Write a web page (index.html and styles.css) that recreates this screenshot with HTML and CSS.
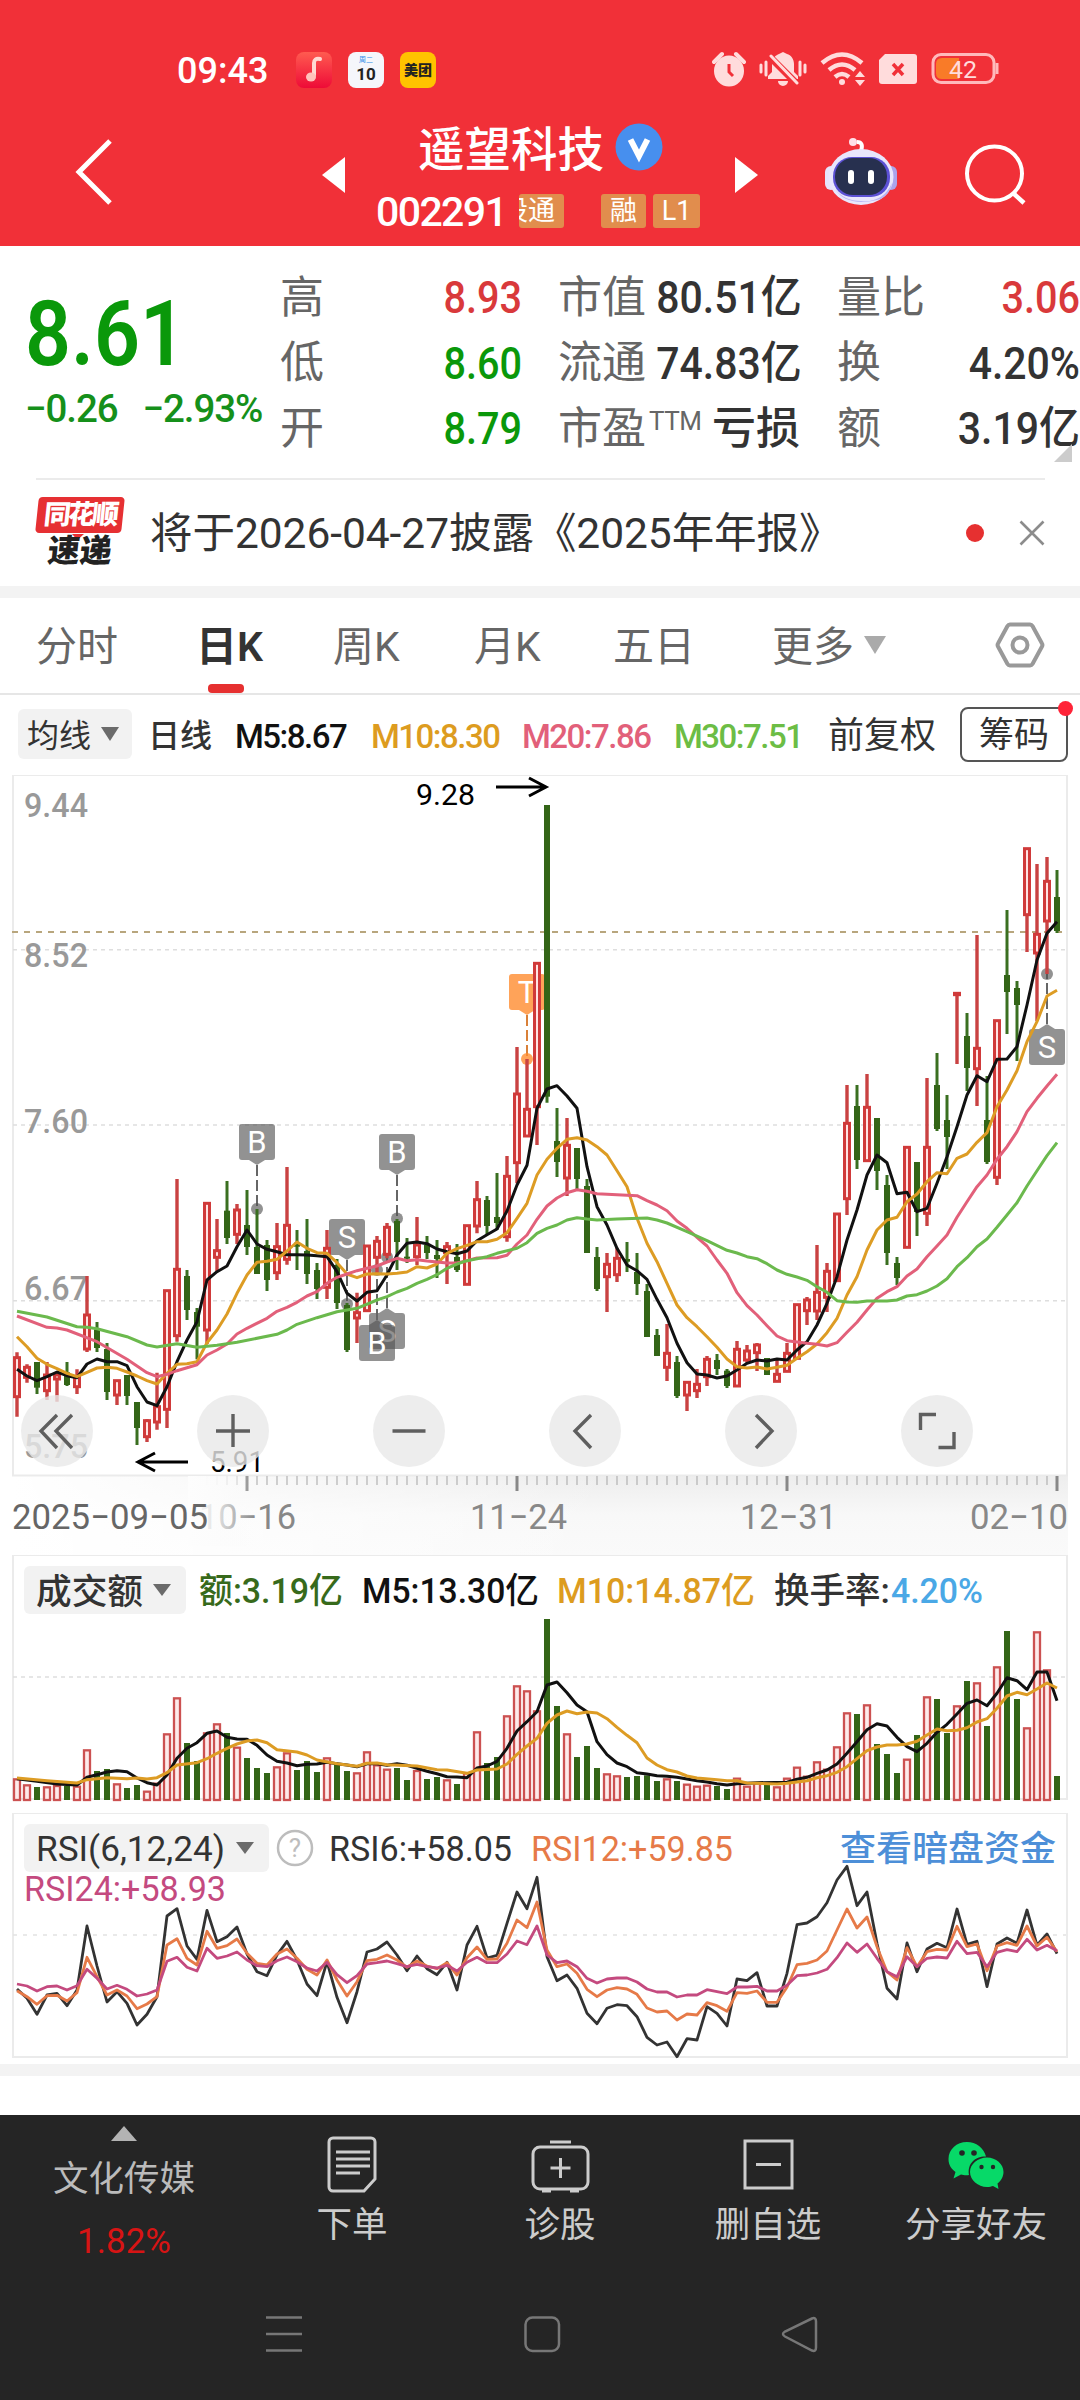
FILE: index.html
```html
<!DOCTYPE html>
<html lang="zh-CN">
<head>
<meta charset="utf-8">
<title>遥望科技 002291</title>
<link rel="stylesheet" href="styles.css">
</head>
<body>
<header class="top">
  <div class="status">
    <span class="clock">09:43</span>
    <span class="app app-music"><svg width="36" height="36" viewBox="0 0 36 36"><path d="M24 7c-4-1-6 1-6 4v12" fill="none" stroke="#ffd9d2" stroke-width="4" stroke-linecap="round"/><ellipse cx="15" cy="25" rx="5" ry="4.5" fill="#ffc2bb"/></svg></span>
    <span class="app app-cal"><i>周二</i><b>10</b></span>
    <span class="app app-mt">美团</span>
    <svg class="sys" width="290" height="40" viewBox="712 50 290 40" fill="#ffdcdc">
      <ellipse cx="729" cy="71" rx="15" ry="15.5"/>
      <path d="M714 62l8-8M744 62l-8-8" stroke="#ffdcdc" stroke-width="4" stroke-linecap="round"/>
      <path d="M729 64v8l4 4" stroke="#f13038" stroke-width="3" fill="none"/>
      <path d="M768 79v-3l4-4v-8c0-6 4-9 7-10l4-2 4 2c4 1 7 5 7 10v8l4 4v3zM778 81h10a5 5 0 0 1-10 0z"/>
      <path d="M769 56l28 28" stroke="#f13038" stroke-width="7"/>
      <path d="M771 56l26 27M766 62v13M761 65v7M800 62v13M805 65v7" stroke="#ffdcdc" stroke-width="3" stroke-linecap="round"/>
      <g fill="none" stroke="#ffdcdc" stroke-width="4.5"><path d="M822 63q20-17 40 0M829 70q13-11 26 0M835 77q7-6 14 0"/></g>
      <circle cx="842" cy="82" r="3"/><path d="M855 77l5-6 5 6zM855 80l5 6 5-6z"/>
      <path d="M885 54h29a3 3 0 0 1 3 3v24a3 3 0 0 1-3 3h-32a3 3 0 0 1-3-3V60z"/>
      <path d="M893 64l10 11M903 64l-10 11" stroke="#f13038" stroke-width="3.5"/>
      <rect x="933" y="54.500" width="61" height="28" rx="8" fill="none" stroke="#ffb9bb" stroke-width="3"/>
      <path d="M942 58h17v21h-17q-6 0-6-6v-9q0-6 6-6z" fill="#f97b28"/>
      <path d="M997 63v11" stroke="#ffb9bb" stroke-width="3"/>
      <text class="batt" x="949" y="77.500" textLength="28" lengthAdjust="spacingAndGlyphs">42</text>
    </svg>
  </div>
  <div class="titlebar">
    <svg class="back" width="40" height="70" viewBox="0 0 40 70"><path d="M35 4L4 35l31 31" fill="none" stroke="#fff" stroke-width="5"/></svg>
    <svg class="prev" width="23" height="36" viewBox="0 0 23 36"><path d="M0 18L23 0v36z" fill="#fff"/></svg>
    <div class="name">
      <div class="name-row"><h1>遥望科技</h1><span class="verified"><svg width="48" height="48" viewBox="0 0 48 48"><circle cx="24" cy="24" r="23.500" fill="#478fee"/><path d="M15.500 16.500L24 33l8.500-16.500" fill="none" stroke="#fff" stroke-width="6"/></svg></span></div>
      <div class="code-row"><span class="code">002291</span><span class="tag cut"><em>股通</em></span><span class="tag rong">融</span><span class="tag lv">L1</span></div>
    </div>
    <svg class="next" width="23" height="36" viewBox="0 0 23 36"><path d="M23 18L0 0v36z" fill="#fff"/></svg>
    <svg class="robot" width="74" height="70" viewBox="824 137 74 70">
      <path d="M861 151q3-9-4-9" fill="none" stroke="#fff" stroke-width="4"/><circle cx="853" cy="142" r="4" fill="#ffdfe8"/>
      <rect x="825" y="166" width="12" height="24" rx="6" fill="#e6e3fb"/><rect x="885" y="166" width="12" height="24" rx="6" fill="#aaa3ec"/>
      <ellipse cx="861" cy="177" rx="32.500" ry="28" fill="#e9e6fc"/><path d="M835 189q12 19 46 10 9-5 11-16-9 20-31 18-17 0-26-12z" fill="#b9b4f3"/>
      <rect x="833" y="157" width="57" height="40" rx="19" fill="#5c51d4"/><rect x="835" y="158" width="52" height="37" rx="18" fill="#27304f"/>
      <rect x="848" y="170" width="6" height="14" rx="3" fill="#fff"/><rect x="868" y="170" width="6" height="14" rx="3" fill="#fff"/>
    </svg>
    <svg class="search" width="62" height="62" viewBox="964 143 62 62"><ellipse cx="994.500" cy="173.500" rx="27.500" ry="27" fill="none" stroke="#fff" stroke-width="4"/><path d="M1013 193l11 10" stroke="#fff" stroke-width="4.500"/></svg>
  </div>
</header>

<section class="quote">
  <div class="price">
    <div class="last">8.61</div>
    <div class="chg"><span>−0.26</span><span class="pct">−2.93%</span></div>
  </div>
  <dl class="stats c1">
    <dt>高</dt><dd class="up">8.93</dd>
    <dt>低</dt><dd class="down">8.60</dd>
    <dt>开</dt><dd class="down">8.79</dd>
  </dl>
  <dl class="stats c2">
    <dt>市值</dt><dd>80.51亿</dd>
    <dt>流通</dt><dd>74.83亿</dd>
    <dt>市盈<sup>TTM</sup></dt><dd class="cn">亏损</dd>
  </dl>
  <dl class="stats c3">
    <dt>量比</dt><dd class="up">3.06</dd>
    <dt>换</dt><dd>4.20%</dd>
    <dt>额</dt><dd>3.19亿</dd>
  </dl>
  <i class="corner"></i>
</section>

<section class="news">
  <div class="logo"><span class="logo-a">同花顺</span><span class="logo-b">速递</span></div>
  <p>将于2026-04-27披露《2025年年报》</p>
  <i class="dot"></i>
  <svg width="26" height="26" viewBox="0 0 26 26"><path d="M1.500 1.500l23 23M24.500 1.500l-23 23" stroke="#8c8c8c" stroke-width="2.600"/></svg>
</section>
<div class="band"></div>

<nav class="tabs">
  <span class="t1">分时</span><span class="t2 on">日K</span><span class="t3">周K</span><span class="t4">月K</span><span class="t5">五日</span><span class="t6">更多<i class="tri"></i></span>
  <svg width="50" height="46" viewBox="0 0 50 46" fill="none" stroke="#999"><path d="M15 2.500h20a3 3 0 0 1 2.500 1.500L47 21.500a3 3 0 0 1 0 3L37.500 42a3 3 0 0 1-2.500 1.500H15a3 3 0 0 1-2.500-1.500L3 24.500a3 3 0 0 1 0-3L12.500 4A3 3 0 0 1 15 2.500z" stroke-width="4"/><circle cx="25" cy="23" r="7.500" stroke-width="4"/></svg>
</nav>

<div class="ma">
  <span class="pick">均线<i class="tri dark"></i></span>
  <b class="day">日线</b>
  <span class="v m5">M5:8.67</span><span class="v m10">M10:8.30</span><span class="v m20">M20:7.86</span><span class="v m30">M30:7.51</span>
  <span class="adj">前复权</span>
  <span class="chip">筹码<i></i></span>
</div>

<svg id="kline" class="chart" width="1080" height="780" viewBox="0 775 1080 780">
  <defs>
    <linearGradient id="axis" x1="0" y1="0" x2="0" y2="1"><stop offset="0" stop-color="#ededed"/><stop offset=".5" stop-color="#f8f8f8"/><stop offset="1" stop-color="#fafafa"/></linearGradient>
    <linearGradient id="fade"><stop offset="0" stop-color="#fff"/><stop offset="1" stop-color="#fff" stop-opacity="0"/></linearGradient>
    <linearGradient id="mask"><stop offset="0" stop-color="#fdfdfd"/><stop offset=".4" stop-color="#fcfcfc" stop-opacity=".8"/><stop offset="1" stop-color="#fafafa" stop-opacity="0"/></linearGradient>
  </defs>
  <rect x="13" y="1475" width="1055" height="80" fill="url(#axis)"/>
  <rect x="13" y="1475" width="600" height="80" fill="url(#fade)"/>
  <rect class="frame" x="13" y="775" width="1054" height="700.500"/>
  <path class="grid" d="M13 949.700H1066M13 1125H1066M13 1300.700H1066"/>
  <g class="scale">
    <text x="24" y="817" textLength="64">9.44</text><text x="24" y="967" textLength="64">8.52</text><text x="24" y="1133" textLength="64">7.60</text><text x="24" y="1300" textLength="64">6.67</text><text x="24" y="1458" textLength="64">5.75</text>
  </g>
  <path d="M12 932H1066" stroke="#b8a67d" stroke-width="2" stroke-dasharray="6 6"/>
  <g id="flags"></g>
  <g id="candles"></g>
  <g id="averages" class="line"></g>
  <g class="mark"><text x="416" y="805" textLength="59">9.28</text><path d="M496 787h49M529 778l17 9-17 9"/><text x="210" y="1472" textLength="54">5.91</text><path d="M188 1462h-50M155 1453l-17 9 17 9"/></g>
  <g id="ticks"></g>
  <g class="dates">
    <text x="199" y="1529" textLength="97">10−16</text>
    <rect x="188" y="1476" width="68" height="70" fill="url(#mask)"/>
    <text class="start" x="12" y="1529" textLength="196">2025−09−05</text>
    <text x="470" y="1529" textLength="97">11−24</text><text x="740" y="1529" textLength="97">12−31</text><text x="970" y="1529" textLength="98">02−10</text>
  </g>
  <g class="ctl">
    <circle cx="57" cy="1431" r="36"/><circle cx="233" cy="1431" r="36"/><circle cx="409" cy="1431" r="36"/><circle cx="585" cy="1431" r="36"/><circle cx="761" cy="1431" r="36"/><circle cx="937" cy="1431" r="36"/>
    <path d="M57 1415l-16 16 16 17M72 1415l-16 16 16 17M216 1431h34M233 1414v33M392.500 1431h33M591 1415l-16 16 16 17M756 1415l16 16-16 17M936 1414.500h-15.500v15.500M938.500 1447.500h15.500v-15.500"/>
  </g>
</svg>

<svg id="turnover" class="chart" width="1080" height="258" viewBox="0 1555 1080 258">
  <rect class="frame" x="13" y="1555" width="1054" height="244"/>
  <path class="grid" d="M13 1677H1066"/>
  <rect x="24" y="1566" width="162" height="48" rx="6" fill="#f2f2f2"/><path d="M153 1584h18l-9 12z" fill="#6b6b6b"/>
  <g class="legend">
    <text x="36" y="1604" textLength="107" fill="#333">成交额</text>
    <text x="199" y="1603" textLength="144" fill="#376a1b">额:3.19亿</text>
    <text x="362" y="1603" textLength="177" fill="#111">M5:13.30亿</text>
    <text x="557" y="1603" textLength="198" fill="#dd9c1f">M10:14.87亿</text>
    <text x="774" y="1603" textLength="116" fill="#333">换手率:</text>
    <text x="891" y="1603" textLength="92" fill="#4aa8e6">4.20%</text>
  </g>
  <g id="bars"></g>
  <g id="barlines" class="line"></g>
</svg>

<svg id="rsi" class="chart" width="1080" height="251" viewBox="0 1813 1080 251">
  <rect class="frame" x="13" y="1813" width="1054" height="244"/>
  <path class="grid dots" d="M13 1935H1066"/>
  <rect x="24" y="1824" width="245" height="48" rx="6" fill="#f2f2f2"/><path d="M236 1842h18l-9 12z" fill="#6b6b6b"/>
  <circle cx="295" cy="1848" r="17" fill="none" stroke="#bdbdbd" stroke-width="2.500"/>
  <text class="help" x="295" y="1857" text-anchor="middle">?</text>
  <g class="legend light">
    <text x="36" y="1861" textLength="189" fill="#333">RSI(6,12,24)</text>
    <text x="329" y="1861" textLength="183" fill="#333">RSI6:+58.05</text>
    <text x="531" y="1861" textLength="202" fill="#e67a48">RSI12:+59.85</text>
    <text x="840" y="1861" textLength="216" fill="#4d8fd8">查看暗盘资金</text>
    <text x="24" y="1901" textLength="202" fill="#c44a7f">RSI24:+58.93</text>
  </g>
  <g id="rsilines" class="line thin"></g>
</svg>
<div class="band"></div>
<div class="gap"></div>

<footer>
  <div class="actions">
    <div class="a sector"><i class="arrow"></i><span>文化传媒</span><b>1.82%</b></div>
    <div class="a"><svg width="60" height="60" viewBox="0 0 60 60"><path d="M11 4h38a4 4 0 0 1 4 4v37L42 57H11a4 4 0 0 1-4-4V8a4 4 0 0 1 4-4zM14 18h34M14 25h34M14 32h34M14 39h24"/></svg><span>下单</span></div>
    <div class="a"><svg width="60" height="60" viewBox="0 0 60 60"><rect x="3" y="13" width="55" height="42" rx="7"/><path d="M20 8h21M30.500 24v20M20.500 34h20M12 57h9M40 57h9"/></svg><span>诊股</span></div>
    <div class="a"><svg width="60" height="60" viewBox="0 0 60 60"><path d="M7 7h47v47H7zM18 30.500h25"/></svg><span>删自选</span></div>
    <div class="a"><svg class="wx" width="60" height="60" viewBox="0 0 60 60"><path d="M21 8C10.500 8 2.500 15.500 2.500 25c0 6 3 10 7 13l-2 6.500 7.500-4c2 .5 5 1 8 .500C21 29 30 22 40 22.500 38 14 30 8 21 8z"/><path d="M41 23.500c-9 0-17 6.500-17 14.500s8 15 17 15c2.500 0 4.500-.500 6-1l5.500 3-1-5.500c3.500-2.500 6-7 6-11.500 0-8-7.500-14.500-16.500-14.500z"/><g fill="#252525"><circle cx="16" cy="19" r="2.800"/><circle cx="28" cy="19" r="2.800"/><circle cx="35.500" cy="33" r="2.200"/><circle cx="47" cy="33" r="2.200"/></g></svg><span>分享好友</span></div>
  </div>
  <svg class="sysnav" width="1080" height="60" viewBox="0 2304 1080 60" fill="none" stroke="#777" stroke-width="2.500"><path d="M266 2317.500h36M266 2334h36M266 2350.500h36"/><rect x="525.500" y="2317.500" width="33.500" height="33.500" rx="7"/><path d="M812 2318.500L785 2331.500q-4 2.500 0 5l27 14q4 1.500 4-3v-26q0-4.500-4-3z"/></svg>
</footer>
<script src="chart.js"></script>
</body>
</html>
```
FILE: styles.css
```css
* { box-sizing: border-box; }
body { margin: 0; width: 1080px; height: 2400px; overflow: hidden; background: #fff; color: #333; font-family: Roboto, "Noto Sans CJK SC", sans-serif; line-height: 1; }
i, em { font-style: normal; }
svg { display: block; flex: none; }
h1, p, dl, dt, dd { margin: 0; }

.top { height: 246px; background: #f13038; color: #fff; }
.status { height: 110px; padding: 30px 78px 0 177px; display: flex; align-items: center; }
.clock { width: 119px; font-size: 36px; font-weight: 500; padding-top: 2px; }
.app { width: 36px; height: 36px; margin-right: 16px; border-radius: 8px; flex: none; display: flex; flex-direction: column; align-items: center; justify-content: center; }
.app-music { background: linear-gradient(#ff5b50, #ee0b37); }
.app-cal { background: #f5f6fb; color: #222; }
.app-cal i { font-size: 7px; color: #2b8be8; }
.app-cal b { font-size: 17px; margin-top: 2px; }
.app-mt { background: #ffc300; color: #222; font-size: 14px; font-weight: 900; }
.sys { margin-left: auto; }
.batt { font-size: 24px; fill: #ffdcdc; }

.titlebar { height: 136px; display: flex; align-items: flex-start; padding-left: 75px; }
.back { margin-top: 27px; }
.prev { margin: 47px 0 0 207px; }
.name { width: 390px; padding-left: 31px; }
.name-row { height: 78px; padding: 13px 0 0 42px; display: flex; }
h1 { font-size: 46.5px; line-height: 54px; font-weight: 500; width: 197px; white-space: nowrap; }
.code-row { display: flex; align-items: flex-start; margin-top: 6px; }
.code { font-size: 41px; font-weight: 500; line-height: 36px; width: 143px; letter-spacing: -1.6px; }
.tag { height: 34px; border-radius: 3px; background: #e18d4d; font-size: 27px; line-height: 34px; width: 45px; text-align: center; overflow: hidden; white-space: nowrap; }
.tag.cut { display: flex; justify-content: flex-end; padding-right: 9px; margin-right: 37px; }
.tag.rong { margin-right: 7px; }
.tag.lv { width: 47px; }
.next { margin: 47px 0 0 0; }
.robot { margin: 27px 0 0 66px; }
.search { margin: 33px 0 0 66px; }

.quote { height: 232px; display: flex; position: relative; }
.price { width: 280px; padding: 42px 0 0 25px; color: #0a980a; white-space: nowrap; }
.last { font-size: 91px; font-weight: 600; height: 104px; line-height: 92px; transform: scaleX(.885); transform-origin: left; }
.chg { font-size: 38.5px; line-height: 34px; font-weight: 500; display: flex; letter-spacing: -1.1px; color: #15901a; }
.pct { margin-left: 25px; }
.stats { display: grid; grid-template-rows: repeat(3, 65.5px); padding-top: 19px; height: 216px; white-space: nowrap; align-items: center; }
.stats dt { font-size: 44px; color: #666; }
.stats dd { font-size: 45px; font-weight: 500; text-align: right; transform: scaleX(.91); transform-origin: right; }
.stats dd.up, .stats dd.down { transform: scaleX(.88); }
.stats dd.cn { transform: none; font-size: 44px; }
.c1 { width: 242px; grid-template-columns: 80px 162px; }
.c2 { width: 242px; margin-left: 36px; grid-template-columns: 84px 158px; }
.c3 { width: 243px; margin-left: 37px; grid-template-columns: 90px 153px; }
sup { font-size: 26px; vertical-align: 14px; line-height: 0; margin-left: 3px; letter-spacing: -.5px; }
.up { color: #d9393b; }
.down { color: #0a980a; }
.corner { position: absolute; right: 8px; bottom: 16px; border-left: 18px solid transparent; border-bottom: 18px solid #ccc; }

.news { height: 108px; margin: 0 35px 0 36px; border-top: 2px solid #ebebeb; display: flex; align-items: center; }
.logo { width: 88px; height: 72px; display: flex; flex-direction: column; align-items: center; margin-right: 26px; }
.logo-a { width: 86px; height: 38px; background: #e63033; border-radius: 4px; color: #fff; font-size: 27px; line-height: 36px; font-weight: 900; letter-spacing: -3px; text-align: center; transform: skewX(-6deg); position: relative; }
.logo-a::after { content: ""; position: absolute; left: 37px; top: 37px; border: 6px solid transparent; border-top-color: #e63033; border-bottom: 0; }
.logo-b { font-size: 32px; line-height: 36px; font-weight: 900; color: #222; transform: skewX(-6deg); }
.news p { font-size: 42.5px; letter-spacing: -.05px; width: 780px; white-space: nowrap; padding-top: 2px; }
.dot { width: 18px; height: 18px; border-radius: 50%; background: #e63030; margin: 0 35px 0 36px; flex: none; }
.band { height: 12px; background: #f3f3f3; }

.tabs { height: 96.5px; border-bottom: 2px solid #e6e6e6; padding: 0 35px 0 36px; display: flex; align-items: center; font-size: 41px; color: #666; white-space: nowrap; }
.tabs span { height: 100%; display: flex; align-items: center; padding-top: 5px; }
.tabs span.on { color: #333; font-weight: 600; position: relative; }
.on::after { content: ""; position: absolute; left: 12px; bottom: 0; width: 36px; height: 9px; border-radius: 4px; background: #e63030; }
.t1 { width: 160px; } .t2 { width: 137px; } .t3 { width: 141px; } .t4 { width: 139px; } .t5 { width: 159px; } .t6 { width: 223px; }
.tri { border: 11px solid transparent; border-top: 18px solid #aaa; border-bottom: 0; margin: -5px 0 0 10px; }
.tri.dark { border-width: 14px 9px 0; border-top-color: #6b6b6b; margin-top: -3px; }

.ma { height: 80.5px; display: flex; align-items: center; padding: 0 12px 1px 18px; white-space: nowrap; font-size: 32px; }
.pick { width: 114px; height: 50px; padding: 3px 0 0 9px; border-radius: 6px; background: #f2f2f2; display: flex; align-items: center; }
.day { width: 87px; margin-left: 16px; font-weight: 500; font-size: 32px; padding-top: 4px; }
.v { font-size: 33px; font-weight: 500; letter-spacing: -1.5px; padding-top: 5px; }
.m5 { width: 136px; color: #111; } .m10 { width: 151px; color: #dd9c1f; } .m20 { width: 152px; color: #e2607a; } .m30 { width: 154px; color: #6cbd45; }
.adj { width: 132px; font-size: 36px; padding-top: 4px; }
.chip { width: 108px; height: 55px; border: 2px solid #555; border-radius: 8px; font-size: 35px; display: flex; align-items: center; justify-content: center; position: relative; padding-top: 3px; }
.chip i { position: absolute; right: -7px; top: -8px; width: 15px; height: 15px; border-radius: 50%; background: #ff2438; }

.frame { fill: none; stroke: #ebebeb; stroke-width: 2; }
.grid { fill: none; stroke: #dedede; stroke-width: 1.5; stroke-dasharray: 4 4; }
.grid.dots { stroke-dasharray: 4 6; stroke: #e2e2e2; }
.scale { font-size: 34px; font-weight: 500; fill: #999; }
.mark text { font-size: 30px; }
.mark path { fill: none; stroke: #000; stroke-width: 3; }
.dates { font-size: 35px; fill: #888; }
.dates .start { fill: #666; }
.ctl circle { fill: #e9e9e9; fill-opacity: .8; }
.ctl path { fill: none; stroke: #5f5f5f; stroke-width: 3.4; }
.line path { fill: none; stroke-width: 3; stroke-linejoin: round; }
.line.thin path { stroke-width: 2.8; }
.legend { font-size: 35px; font-weight: 500; }
.legend.light { font-weight: 450; }
.help { font-size: 26px; fill: #bdbdbd; }
.flag text { font-size: 31px; fill: #fff; text-anchor: middle; }

.gap { height: 39px; }
footer { height: 285px; background: #252525; color: #ccc; }
.actions { height: 189px; display: flex; padding-left: 20px; font-size: 35.5px; white-space: nowrap; }
.a { width: 208px; padding-top: 19px; display: flex; flex-direction: column; align-items: center; }
.a svg { fill: none; stroke: #ccc; stroke-width: 3; }
.a svg + span { margin-top: 14px; }
.a .wx { fill: #07d968; stroke: none; }
.sector { padding-top: 11px; margin-right: 20px; color: #bbb; }
.arrow { border: 13px solid transparent; border-top: 0; border-bottom: 15px solid #b3b3b3; }
.sector span { margin-top: 21px; }
.sector b { margin-top: 26px; font-weight: 400; color: #d71414; font-size: 35px; }
```
FILE: chart.js
```js
// Trading days are 10px apart; levels are in thirds of a pixel from each panel's base line.
const X = i => 17 + 10 * i;
const el = (id, html) => { document.getElementById(id).innerHTML = html; };

// Each day: colour, high, body top, body bottom, low.
const days = `r 637 653 770 830|r 673 682 712 728|g 666 666 743 762|r 666 705 752 780|r 695 705 717 785|g 666 697 735 738|r 688 712 740 762|r 408 525 627 636|g 546 568 624 636|g 609 627 756 780|r 720 722 765 795|g 705 705 768 795|g 786 786 864 915|r 838 842 890 906|r 698 800 846 869|r 450 452 808 864|r 117 388 587 605|g 390 408 510 540|g 504 516 560 658|r 188 190 570 612|r 237 332 352 395|g 123 212 294 312|r 192 210 283 312|g 150 255 321 345|g 207 321 402 402|g 300 315 420 453|r 249 320 398 420|r 81 256 358 374|g 270 308 320 390|g 237 333 402 432|g 369 390 447 477|r 270 325 442 477|g 357 375 489 507|g 489 495 630 636|r 458 518 534 609|r 316 318 512 515|r 288 304 352 405|r 249 262 343 355|g 237 243 306 390|g 294 350 354 369|r 231 315 350 375|g 288 315 339 357|g 300 345 357 414|r 306 320 338 432|g 312 351 390 396|r 255 257 433 435|r 123 179 258 280|g 168 180 258 282|g 99 231 249 270|r 48 109 290 305|r -279 -138 68 130|r -243 -92 -12 -12|r -532 -530 -100 15|g -1005 -1005 -130 -112|g -96 3 66 111|r -66 16 114 168|g 24 24 117 150|g 117 138 339 339|g 321 351 447 453|r 339 373 410 516|r 325 355 404 426|g 306 357 365 396|g 339 396 432 465|g 432 453 591 591|g 567 585 648 648|r 552 640 682 723|g 648 666 768 774|r 725 727 765 813|r 687 733 752 774|r 648 658 710 738|g 642 660 687 705|g 687 692 738 744|r 603 628 738 740|r 615 633 660 668|r 609 615 638 693|g 654 654 705 705|r 660 703 724 726|r 609 640 694 696|r 492 494 655 657|r 471 480 512 555|r 315 457 513 540|r 369 394 472 516|r 219 222 422 424|r -165 -50 176 225|g -165 -102 60 87|r -198 -98 62 62|g -66 -66 93 150|g 105 135 339 375|g 351 369 414 435|r 20 22 322 324|g 66 66 216 288|r -186 22 220 258|g -261 -165 -33 -27|g -135 -60 -9 87|r -442 -440 -436 -228|g -381 -312 -216 -147|r -615 -275 -214 -102|g -192 -60 66 72|r -360 -358 112 135|g -690 -495 -444 -318|g -477 -456 -405 -237|r -876 -874 -676 -564|r -828 -617 -561 -357|r -849 -776 -657 -498|g -810 -729 -627 -621`
  .split('|').map(s => { const p = s.split(' '); return [p[0], ...p.slice(1).map(v => 1140 + v / 3)]; });

el('candles', days.map(([c, h, t, b, l], i) => {
  const x = X(i);
  if (c === 'g') return `<path d="M${x} ${h}V${l}" stroke="#3a6f20" stroke-width="3"/><rect x="${x - 3}" y="${t}" width="6" height="${Math.max(b - t, 2)}" fill="#336517"/>`;
  return `<path d="M${x} ${h}V${t}M${x} ${b}V${l}" stroke="#c94242" stroke-width="3.4"/><rect x="${x - 2.5}" y="${t}" width="5" height="${b - t}" fill="#ffe3e3" stroke="#d03a3a" stroke-width="3"/>`;
}).join(''));

const path = (pts, base, color) => '<path stroke="' + color + '" d="M' + pts.map(([i, v]) => X(i) + ' ' + (base + v / 3).toFixed(1)).join('L') + '"/>';
const dense = s => s.split(' ').map((v, i) => [i, +v]);
const sparse = s => s.split(' ').map(p => p.split(':').map(Number));

const m5 = dense('688 708 722 710 696 707 713 672 657 665 665 677 740 786 797 740 665 600 545 420 395 378 320 270 312 328 335 344 344 345 347 350 395 460 483 457 452 405 345 310 306 311 327 335 341 333 302 284 267 213 135 76 -95 -153 -163 -132 -95 80 200 255 325 375 392 418 478 533 610 668 702 705 714 708 690 670 660 663 657 660 630 605 555 490 410 300 210 105 45 68 161 157 215 205 130 50 -40 -135 -193 -175 -242 -243 -280 -405 -540 -620 -655');
const m10 = dense('590 620 655 673 686 700 710 697 684 682 685 696 708 722 732 700 673 671 665 608 570 522 460 405 367 364 358 333 306 325 338 340 368 402 413 402 401 402 400 396 380 384 372 340 326 316 305 305 298 278 235 190 105 58 25 -2 -7 0 20 45 92 140 235 310 365 430 495 533 560 590 622 657 680 684 681 687 682 676 655 635 612 578 535 465 410 330 270 240 232 185 162 125 98 101 55 42 7 -22 -100 -150 -208 -295 -355 -432 -449');
const m20 = sparse('0:528 3:562 4:564 5:570 8:605 11:658 13:698 14:710 15:703 16:692 18:674 19:645 20:630 21:612 22:582 23:565 25:535 26:514 27:502 28:487 29:468 30:455 31:430 32:412 33:402 34:392 35:385 36:378 37:366 38:355 39:362 40:359 41:363 42:366 43:369 44:369 45:362 46:354 48:353 49:346 50:312 51:285 52:238 53:198 54:174 55:158 56:149 57:154 58:161 60:164 62:167 63:182 64:195 65:212 66:243 67:265 68:292 69:318 70:360 71:400 72:458 73:497 74:525 75:557 76:588 77:602 78:606 79:610 80:613 81:618 82:608 83:577 84:547 85:510 86:475 87:455 88:440 89:408 90:387 91:350 92:318 93:285 94:232 95:185 96:140 97:105 98:58 99:20 100:-25 101:-85 102:-125 103:-162 104:-197');
const m30 = sparse('0:514 3:531 6:560 7:562 8:566 11:590 13:615 14:621 16:611 18:622 20:616 22:607 26:583 27:570 28:553 30:533 32:515 34:505 36:480 37:470 38:456 39:445 40:430 41:418 42:404 43:385 44:372 45:362 47:350 48:340 50:325 51:308 52:280 53:265 54:255 55:240 56:233 57:237 58:240 60:237 63:234 64:240 65:249 67:275 69:302 71:331 72:339 73:350 74:356 75:371 76:390 77:403 78:411 79:421 80:440 81:457 82:482 83:486 84:487 85:483 87:483 88:480 89:468 90:464 91:453 92:438 93:416 94:380 95:353 96:320 97:297 98:262 99:225 100:188 101:138 102:92 103:47 104:8');
el('averages', path(m5, 1140, '#111') + path(m10, 1140, '#dd9c24') + path(m20, 1140, '#e2607a') + path(m30, 1140, '#6bb94d'));

// Trade flags: letter, day, box top, dot level, colour.
const grey = '#555';
const flags = [['T', 51, 974, 1059, '#ff8a2b'], ['B', 24, 1124, 1209, grey], ['B', 38, 1134, 1218.5, grey], ['S', 33, 1219, 1304, grey], ['S', 37, 1313, 1257, grey], ['B', 36, 1325, 1270, grey], ['S', 103, 1029, 974, grey]];
el('flags', flags.map(([s, i, top, dot, c]) => {
  const x = X(i), below = dot < top, edge = below ? top : top + 36, d = below ? -5 : 5;
  const o = s === 'T' ? .78 : .64;
  return `<g class="flag"><path d="M${x} ${edge + d}V${dot}" stroke="${s === 'T' ? '#d98038' : '#666'}" stroke-width="2" stroke-dasharray="11 4"/>
<g opacity="${o}" fill="${c}"><circle cx="${x}" cy="${dot}" r="6"/><rect x="${x - 18}" y="${top}" width="36" height="36" rx="3"/><path d="M${x - 8} ${edge}h16l-8 ${d}z"/></g><text x="${x}" y="${top + 29}">${s}</text></g>`;
}).join(''));

let ticks = '';
for (let i = 19; i <= 104; i++) {
  const major = (i - 23) % 27 === 0;
  ticks += `<path d="M${X(i)} 1476v${major ? 15 : 9}" stroke="${major ? '#888' : '#a5a5a5'}" stroke-width="${major ? 3 : 1}" opacity="${i < 23 ? (i - 18) / 5 : 1}"/>`;
}
el('ticks', ticks);

const vol = dense('715 733 741 739 735 738 737 628 693 687 730 744 735 752 728 580 472 609 663 577 550 579 620 654 684 699 679 637 690 663 696 652 673 693 697 634 673 686 684 720 690 717 711 718 732 697 574 669 651 526 436 451 511 237 498 580 651 618 684 700 706 711 708 706 723 715 723 731 737 734 738 747 713 737 727 735 739 713 680 707 664 686 619 517 522 493 612 642 699 656 585 469 477 579 496 423 427 558 379 273 477 562 274 388 708');
el('bars', vol.map(([i, v]) => {
  const y = 1540 + v / 3, h = 1800 - y, x = X(i);
  return days[i][0] === 'g' ? `<rect x="${x - 3}" y="${y}" width="6" height="${h}" fill="#336517"/>`
    : `<rect x="${x - 3}" y="${y + 1}" width="6" height="${h - 1}" fill="#fdeaea" stroke="#cc5151" stroke-width="2.3"/>`;
}).join(''));
const v5 = sparse('0:716 2:724 4:732 6:735 7:712 8:704 9:696 10:692 11:695 12:714 13:728 14:735 15:705 16:655 17:625 18:608 19:580 20:573 21:592 22:597 23:598 24:616 25:645 26:664 27:669 28:677 29:673 30:672 31:667 32:671 33:675 34:680 35:671 36:671 37:676 38:671 39:676 40:685 41:694 42:701 43:710 44:711 45:713 46:684 47:678 48:664 49:625 50:573 51:545 52:515 53:435 54:426 55:458 56:495 57:515 58:605 59:644 60:669 61:680 62:698 63:702 64:707 65:709 66:712 67:717 68:722 69:726 70:731 71:735 72:731 74:728 77:727 78:718 79:712 80:700 81:690 82:672 83:640 84:605 85:569 86:551 87:558 88:592 89:620 90:635 91:610 92:577 93:553 94:522 95:490 96:480 97:497 98:460 99:413 100:422 101:449 102:396 103:396 104:482');
const v10 = sparse('0:714 3:722 6:729 7:719 9:713 11:716 12:714 13:717 14:713 15:698 16:675 18:668 19:656 20:640 21:625 22:612 23:603 24:600 25:608 26:629 28:636 29:645 30:660 32:671 34:679 35:670 36:669 37:674 40:678 42:689 43:690 45:700 46:690 48:687 49:672 50:643 51:618 52:595 53:550 54:525 55:513 56:521 57:516 58:519 59:536 60:562 61:586 62:608 63:654 64:675 65:689 66:696 67:708 68:714 70:719 71:722 72:722 73:729 76:732 77:730 78:726 79:722 80:713 81:707 82:697 83:680 84:656 85:632 86:621 87:615 88:615 89:612 90:604 91:585 92:567 93:572 94:571 95:563 96:546 97:536 98:505 99:468 100:457 101:464 102:447 103:429 104:444');
el('barlines', path(v5, 1540, '#111') + path(v10, 1540, '#dd9c24'));

const r6 = dense('567 595 643 585 580 617 570 378 498 606 575 610 675 643 590 348 326 438 478 331 425 410 381 462 515 527 465 424 480 552 587 485 592 668 575 456 447 426 465 512 468 506 524 487 570 435 379 474 466 370 276 326 232 470 542 525 565 640 671 625 614 617 650 712 735 726 770 716 720 620 640 678 537 542 518 618 618 520 374 369 350 308 240 199 317 276 430 565 597 429 515 447 430 443 327 433 424 560 432 414 430 330 436 402 461');
const r12 = dense('572 590 613 587 586 603 578 472 530 585 570 588 626 612 590 435 416 475 495 394 445 437 417 460 490 495 462 447 475 508 525 480 540 588 545 482 478 465 480 502 483 498 506 488 525 473 441 478 477 430 360 383 306 450 500 492 520 568 590 570 563 567 583 624 636 633 660 642 645 608 617 634 578 580 573 607 607 562 494 490 480 453 390 327 384 351 440 515 540 443 500 455 448 450 379 440 432 512 438 428 436 378 438 412 455');
const r24 = dense('552 558 573 560 558 570 557 508 535 567 556 568 588 582 570 484 472 502 513 445 475 468 456 480 497 500 482 471 485 504 513 487 524 548 527 492 488 483 491 500 493 500 504 496 513 487 472 488 488 462 423 434 378 465 488 483 500 535 549 537 534 534 546 567 576 576 591 585 585 569 575 581 561 561 559 573 573 556 527 525 519 508 473 429 457 432 475 515 530 470 500 475 471 474 424 461 457 500 457 449 455 418 450 436 452');
el('rsilines', path(r6, 1800, '#333') + path(r12, 1800, '#e67a48') + path(r24, 1800, '#c44a7f'));

document.querySelectorAll('text[textLength]').forEach(t => t.setAttribute('lengthAdjust', 'spacingAndGlyphs'));
```
